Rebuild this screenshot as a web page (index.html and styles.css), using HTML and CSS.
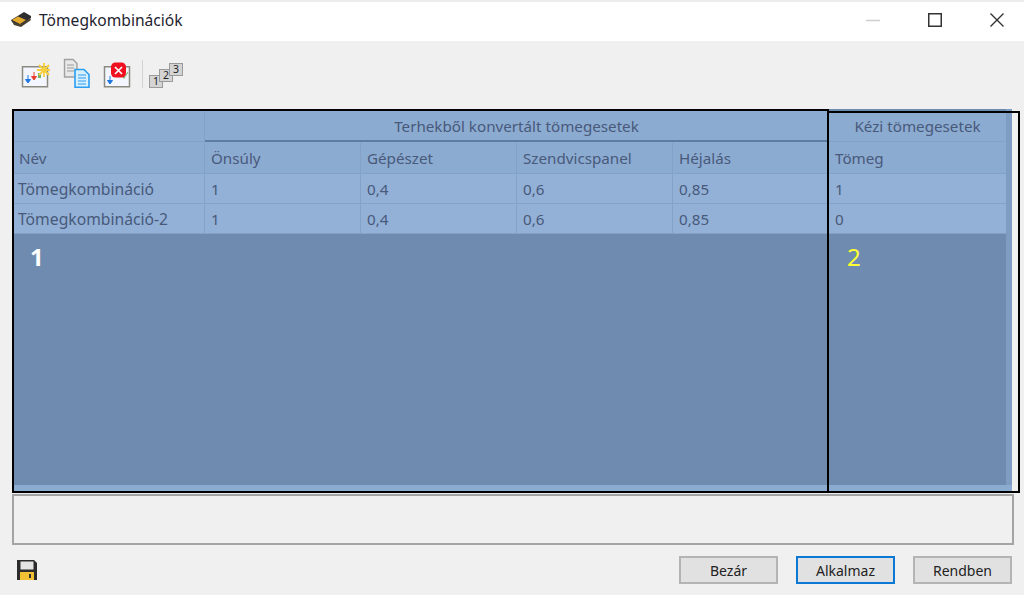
FILE: index.html
```html
<!DOCTYPE html>
<html lang="hu">
<head>
<meta charset="utf-8">
<title>Tömegkombinációk</title>
<link rel="stylesheet" href="styles.css">
</head>
<body>
<div class="window">
  <header class="titlebar">
    <svg class="app-icon" width="21" height="16" viewBox="0 0 21 16">
      <path d="M0 8 L5 5 L13 0 L20 4 L20 6 L12 12 L8 13 L1 10 Z" fill="#2e2e2e"/>
      <path d="M1 8 L7 4.5 L15 8 L9 12 Z" fill="#e3a92c"/>
      <path d="M1 9.5 L9 12.5 L19 6.5 L20 8 L10 15 L3 13 Z" fill="#4a4030"/>
    </svg>
    <span class="title">Tömegkombinációk</span>
    <div class="winctl">
      <svg width="14" height="14" viewBox="0 0 14 14"><path d="M0 7.5H14" stroke="#cfcfcf" stroke-width="1.5"/></svg>
      <svg width="14" height="14" viewBox="0 0 14 14"><rect x="0.75" y="0.75" width="12.5" height="12.5" fill="none" stroke="#333" stroke-width="1.5"/></svg>
      <svg width="14" height="14" viewBox="0 0 14 14"><path d="M0.5 0.5L13.5 13.5M13.5 0.5L0.5 13.5" stroke="#333" stroke-width="1.4"/></svg>
    </div>
  </header>

  <div class="toolbar">
    <svg class="tool" width="30" height="28" viewBox="0 0 30 28">
      <rect x="2.5" y="5.75" width="25" height="20" fill="#f4f6ff" stroke="#8a8a80" stroke-width="1.5"/>
      <path d="M8 14V21M5.5 18.5L8 22L10.5 18.5Z" fill="#1f78e0" stroke="#1f78e0"/>
      <path d="M14 11V18M11.5 15.5L14 19L16.5 15.5Z" fill="#e8402c" stroke="#e8402c"/>
      <path d="M18 12h3v5h-3z" fill="#70b060"/>
      <path d="M24 2V16M17 9H30M19 4L29 14M29 4L19 14" stroke="#f7cf3c" stroke-width="1.8"/>
    </svg>
    <svg class="tool tool-copy" width="30" height="30" viewBox="0 0 30 30">
      <path d="M3.5 1.5H12L16 5.5V19H3.5Z" fill="#e8e8e8" stroke="#a0a0a0" stroke-width="1.4"/>
      <path d="M6 7H13M6 10H13M6 13H13" stroke="#9a9a9a"/>
      <path d="M14 11.5H23L28 16.5V29.2H14Z" fill="#d8effd" stroke="#2a9ef0" stroke-width="1.6"/>
      <path d="M17 17H25M17 20H25M17 23H25M17 26H25" stroke="#2a9ef0" stroke-width="1.2"/>
    </svg>
    <svg class="tool" width="30" height="28" viewBox="0 0 30 28">
      <rect x="2.5" y="5.75" width="25" height="20" fill="#f4f6ff" stroke="#8a8a80" stroke-width="1.5"/>
      <path d="M8 15V22M5.5 19.5L8 23L10.5 19.5Z" fill="#1f78e0" stroke="#1f78e0"/>
      <path d="M20 15L22 17L26 11" fill="none" stroke="#80c070" stroke-width="1.2"/>
      <rect x="9" y="1.5" width="15" height="15" rx="4.5" fill="#f01020"/>
      <path d="M13 6L20 13M20 6L13 13" stroke="#fff" stroke-width="1.7"/>
    </svg>
    <span class="tool-sep"></span>
    <div class="numstack" aria-label="123">
      <span class="num n1">1</span><span class="num n2">2</span><span class="num n3">3</span>
    </div>
  </div>

  <main class="table-wrap">
    <div class="grid">
      <div class="cell head blank"></div>
      <div class="cell head group">Terhekből konvertált tömegesetek</div>
      <div class="cell head group2">Kézi tömegesetek</div>

      <div class="cell head">Név</div>
      <div class="cell head">Önsúly</div>
      <div class="cell head">Gépészet</div>
      <div class="cell head">Szendvicspanel</div>
      <div class="cell head">Héjalás</div>
      <div class="cell head">Tömeg</div>

      <div class="cell name">Tömegkombináció</div>
      <div class="cell">1</div>
      <div class="cell">0,4</div>
      <div class="cell">0,6</div>
      <div class="cell">0,85</div>
      <div class="cell">1</div>

      <div class="cell name">Tömegkombináció-2</div>
      <div class="cell">1</div>
      <div class="cell">0,4</div>
      <div class="cell">0,6</div>
      <div class="cell">0,85</div>
      <div class="cell">0</div>
    </div>
    <div class="vstrip"></div>
    <div class="hstrip"></div>
    <div class="frame frame-1"><span class="mark mark-1">1</span></div>
    <div class="frame frame-2"><span class="mark mark-2">2</span></div>
  </main>

  <div class="message"></div>

  <footer class="footer">
    <svg class="save" width="20" height="20" viewBox="0 0 20 20">
      <path d="M0 0H17L20 3V20H0Z" fill="#2b2b2b"/>
      <rect x="3.5" y="1.5" width="13" height="8" fill="#e4e4e4"/>
      <rect x="3" y="12" width="14" height="8" fill="#f2c133"/>
      <rect x="12" y="14" width="2" height="4" fill="#333"/>
    </svg>
    <div class="buttons">
      <button class="btn">Bezár</button>
      <button class="btn primary">Alkalmaz</button>
      <button class="btn">Rendben</button>
    </div>
  </footer>
</div>
</body>
</html>
```
FILE: styles.css
```css
* { box-sizing: border-box; }
html, body { margin: 0; padding: 0; }
body {
  width: 1024px;
  height: 595px;
  overflow: hidden;
  background: #f0f0f0;
  font-family: "Noto Sans", "Open Sans", sans-serif;
  font-size: 14px;
}
.window { display: flex; flex-direction: column; height: 595px; border-top: 2px solid #ececec; }

.titlebar {
  height: 39px;
  background: #fff;
  display: flex;
  align-items: center;
  padding: 0 0 3px 11px;
  color: #1f2430;
}
.app-icon { margin-right: 7px; }
.title { font-size: 15.6px; }
.winctl { margin-left: auto; display: flex; gap: 48px; padding-right: 20px; align-items: center; }

.toolbar {
  height: 68px;
  display: flex;
  align-items: center;
  padding: 0 0 0 20px;
}
.tool { margin-right: 11px; flex: none; }
.tool-copy { margin-top: -4px; }
.tool-sep { width: 1px; height: 28px; background: #d2d2d2; margin: -2px 6px 0 -1px; }
.numstack { position: relative; width: 34px; height: 28px; margin-top: 2px; }
.num {
  position: absolute;
  width: 14px;
  height: 13px;
  background: #d4d4d4;
  border: 1.5px solid #9a9a9a;
  font-size: 10.5px;
  line-height: 10px;
  text-align: center;
  color: #222;
}
.n1 { left: 0; top: 13px; }
.n2 { left: 10px; top: 7px; }
.n3 { left: 20px; top: 1px; }

.table-wrap {
  position: relative;
  height: 384px;
  margin: 0 12px;
  padding: 2px 0 8px 1px;
  background: #6f8bb0;
  width: 1000px;
}
.grid {
  display: grid;
  grid-template-columns: 192px 156px 156px 156px 156px 178px;
  grid-template-rows: 31px 32px 30px 30px;
  color: #48597a;
  font-size: 15.2px;
}
.cell {
  background: #93b1d7;
  border-right: 1px solid #84a2c8;
  border-bottom: 1px solid #84a2c8;
  padding: 0 6px;
  display: flex;
  align-items: center;
  white-space: nowrap;
}
.cell.name { padding-left: 5px; font-size: 15.7px; }
.head { background: #8cabd1; padding-left: 6px; }
.blank { grid-column: 1; }
.group {
  grid-column: 2 / span 4;
  justify-content: center;
  border-bottom: 2px solid #5f7ba3;
}
.group2 { grid-column: 6; justify-content: center; }

.vstrip { position: absolute; top: 0; bottom: 0; right: 0; width: 6px; background: #7f9cc3; }
.hstrip { position: absolute; left: 0; right: 0; bottom: 0; height: 8px; background: #8cabd1; }

.frame { position: absolute; border: 2px solid #000; }
.frame-1 { left: 0; top: 0; width: 817px; height: 384px; }
.frame-2 { left: 815px; top: 2px; width: 193px; height: 382px; }
.mark { position: absolute; font-size: 24px; line-height: 30px; top: 131px; }
.mark-1 { left: 16px; color: #fff; font-weight: 700; }
.mark-2 { left: 18px; color: #ffff33; top: 129px; }

.message {
  height: 51px;
  margin: 1px 10px 0 12px;
  background: #f0f0f0;
  border: 2px solid #a4a4a4;
  width: 1002px;
}
.footer {
  flex: 1;
  display: flex;
  align-items: flex-start;
  padding: 11px 12px 0 17px;
}
.save { margin-top: 4px; }
.buttons { margin-left: auto; display: flex; gap: 18px; }
.btn {
  width: 99px;
  height: 28px;
  background: #e1e1e1;
  border: 2px solid #b4b4b4;
  font: inherit;
  font-size: 14px;
  color: #222;
  padding: 0;
}
.btn.primary { border-color: #0a78d4; }
```
